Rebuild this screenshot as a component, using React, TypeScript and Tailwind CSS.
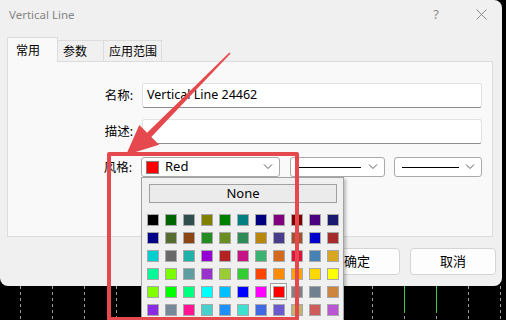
import React from 'react'

// MT4 web colour palette, row by row
const PALETTE: string[][] = [
  ['#000000', '#006400', '#2F4F4F', '#808000', '#008000', '#008080', '#000080', '#800080', '#800000', '#4B0082', '#191970'],
  ['#00008B', '#556B2F', '#8B4513', '#228B22', '#6B8E23', '#2E8B57', '#B8860B', '#483D8B', '#A0522D', '#0000CD', '#A52A2A'],
  ['#00CED1', '#696969', '#20B2AA', '#9400D3', '#B22222', '#C71585', '#3CB371', '#D2691E', '#DC143C', '#4682B4', '#DAA520'],
  ['#00FA9A', '#7CFC00', '#5F9EA0', '#9932CC', '#9ACD32', '#32CD32', '#FF4500', '#FF8C00', '#FFA500', '#FFD700', '#FFFF00'],
  ['#7FFF00', '#00FF00', '#00FF7F', '#00FFFF', '#00BFFF', '#0000FF', '#FF00FF', '#FF0000', '#808080', '#708090', '#CD853F'],
  ['#8A2BE2', '#778899', '#FF1493', '#48D1CC', '#1E90FF', '#40E0D0', '#4169E1', '#6A5ACD', '#BDB76B', '#CD5C5C', '#BA55D3'],
]

const SELECTED = '#FF0000'

const Chevron = () => (
  <svg width="10" height="6" viewBox="0 0 10 6" fill="none" stroke="#5a5a5a" strokeWidth={1}>
    <path d="M1 0.5l4 4 4-4" />
  </svg>
)

const Tab = ({ label, active, w }: { label: string; active?: boolean; w: string }) => (
  <div
    className={
      active
        ? `${w} h-[25px] -mb-px relative z-10 bg-[#f9f9f9] border border-b-0 border-[#dcdcdc] pl-[8px] pt-[4px] text-[12px] text-black`
        : `${w} h-[21px] bg-[#f0f0f0] border-t border-r border-[#dcdcdc] pl-[5px] pt-[2px] text-[12px] text-black`
    }
  >
    {label}
  </div>
)

const LineCombo = ({ w, line }: { w: string; line: string }) => (
  <div className={`${w} h-[20px] flex items-center bg-white border border-[#a9a9a9] rounded-[3px] pl-[7px] pr-[6px]`}>
    <div className={`${line} h-px bg-black`} />
    <div className="ml-auto">
      <Chevron />
    </div>
  </div>
)

export default function App() {
  return (
    <div className="relative w-[506px] h-[320px] overflow-hidden bg-black font-['Noto_Sans','Noto_Sans_CJK_SC',sans-serif]">
      {/* Dialog */}
      <div className="w-[502px] h-[286px] rounded-tr-[8px] rounded-b-[8px] bg-[#f0f0f0] flex flex-col">
        {/* Title bar */}
        <div className="h-[28px] flex items-center pl-[9px] pr-[15px] pt-[1px]">
          <span className="text-[11.5px] text-[#858585]">Vertical Line</span>
          <span className="ml-auto text-[13px] text-[#8a8a8a] leading-none">?</span>
          <svg className="ml-[37px]" width="11" height="11" viewBox="0 0 11 11" stroke="#8a8a8a" strokeWidth={1}>
            <path d="M0.5 0.5l10 10M10.5 0.5l-10 10" />
          </svg>
        </div>

        {/* Tabs + panel */}
        <div className="px-[7px] pt-[9px] pr-[9px]">
          <div className="flex items-end h-[24px]">
            <Tab label="常用" active w="w-[51px]" />
            <Tab label="参数" w="w-[46px]" />
            <Tab label="应用范围" w="w-[58px]" />
          </div>
          <div className="h-[176px] bg-[#f9f9f9] border border-[#dcdcdc] pt-[21px] pr-[10px] flex flex-col">
            <div className="flex items-center h-[25px]">
              <span className="w-[129px] pr-[4px] pt-[2px] text-right text-[12.5px] text-black">名称:</span>
              <div className="flex-1 h-[25px] ml-[5px] bg-white border border-[#e2e2e2] border-b-[#8d8d8d] rounded-[3px] flex items-center pl-[4px] text-[12.5px] text-black">
                Vertical Line 24462
              </div>
            </div>
            <div className="flex items-center h-[25px] mt-[11px]">
              <span className="w-[129px] pr-[4px] pt-[2px] text-right text-[12.5px] text-black">描述:</span>
              <div className="flex-1 h-[25px] ml-[5px] bg-white border border-[#e2e2e2] border-b-[#8d8d8d] rounded-[3px]" />
            </div>
            <div className="flex items-center h-[20px] mt-[13px]">
              <span className="w-[129px] pr-[4px] pt-[2px] text-right text-[12.5px] text-black">风格:</span>
              <div className="w-[140px] h-[20px] ml-[5px] flex items-center bg-white border border-[#a9a9a9] rounded-[3px] pl-[4px] pr-[6px]">
                <div className="w-[13px] h-[13px] bg-[#ff0000] border border-[#808080]" />
                <span className="ml-[6px] text-[13px] text-black">Red</span>
                <div className="ml-auto">
                  <Chevron />
                </div>
              </div>
              <div className="ml-[10px]">
                <LineCombo w="w-[95px]" line="w-[63px]" />
              </div>
              <div className="ml-[9px]">
                <LineCombo w="w-[88px]" line="w-[57px]" />
              </div>
            </div>
          </div>
        </div>

        {/* Buttons */}
        <div className="mt-[11px] flex justify-end gap-[10px] pr-[6px]">
          <button className="w-[86px] h-[27px] bg-[#fdfdfd] border border-[#d4d4d4] rounded-[4px] text-[13px] text-black">确定</button>
          <button className="w-[86px] h-[27px] bg-[#fdfdfd] border border-[#d4d4d4] rounded-[4px] text-[13px] text-black">取消</button>
        </div>
      </div>

      {/* Chart grid under the dialog */}
      <svg width="506" height="34" className="block">
        {Array.from({ length: 16 }, (_, k) => (
          <line key={k} x1={20.5 + 32 * k} y1={0} x2={20.5 + 32 * k} y2={34} stroke="#9c9c9c" strokeDasharray="3 3" />
        ))}
        <line x1={404.5} y1={0} x2={404.5} y2={27} stroke="#3ccf3c" />
        <line x1={436.5} y1={0} x2={436.5} y2={27} stroke="#3ccf3c" />
      </svg>

      {/* Colour drop-down */}
      <div className="absolute left-[141px] top-[177px] w-[203px] h-[150px] bg-[#f0f0f0] border border-[#a3a3a3] shadow-[2px_2px_3px_rgba(0,0,0,0.25)]">
        <div className="ml-[7px] mt-[6px] w-[188px] h-[19px] bg-[#ebebeb] border border-[#a0a0a0] flex items-center justify-center text-[13px] text-black">
          None
        </div>
        <div className="ml-[2px] mt-[8px] grid grid-cols-[repeat(11,18px)] grid-rows-[repeat(6,18px)]">
          {PALETTE.flat().map((c, i) => (
            <div
              key={i}
              className={
                c === SELECTED
                  ? 'w-[17px] h-[17px] flex items-center justify-center bg-white border border-[#a0a0a0]'
                  : 'w-[18px] h-[18px] flex items-center justify-center'
              }
            >
              <div className="w-[12px] h-[12px] border border-[#a8a8a8]" style={{ backgroundColor: c }} />
            </div>
          ))}
        </div>
      </div>

      {/* Annotation: rectangle + arrow */}
      <div className="absolute left-[107px] top-[152px] w-[192px] h-[169px] border-[4px] border-[#e5484d] rounded-[2px] pointer-events-none" />
      <svg className="absolute left-0 top-0 pointer-events-none" width="506" height="320">
        <polygon
          points="230.6,53.4 151.3,136.9 159.1,144.7 126,155 139.3,124.9 147.1,132.7 229.4,52.6"
          fill="#e5484d"
        />
      </svg>
    </div>
  )
}
